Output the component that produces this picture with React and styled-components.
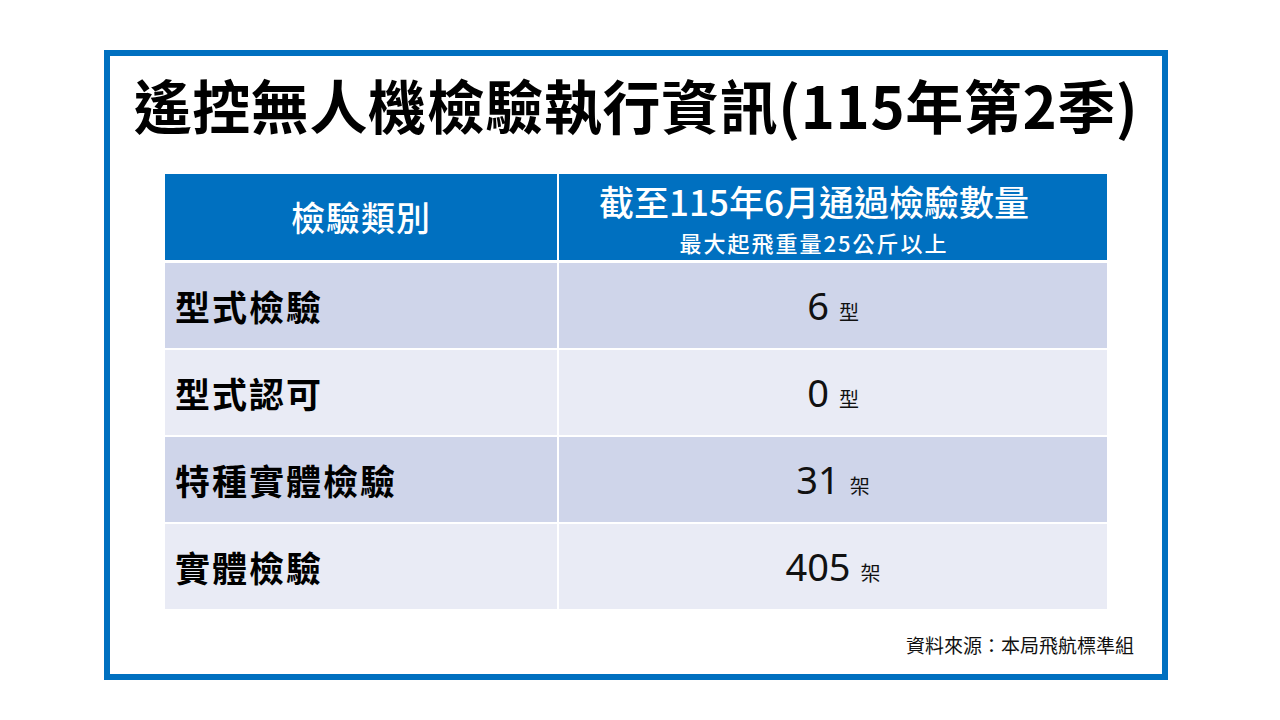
import React from 'react';
import styled, { createGlobalStyle } from 'styled-components';

const GlobalStyle = createGlobalStyle`
  html, body {
    margin: 0;
    padding: 0;
    background: #ffffff;
  }
  body {
    font-family: "Noto Sans CJK TC", "Noto Sans", sans-serif;
    color: #000000;
  }
`;

const blue = '#0070C0';

const Page = styled.div`
  width: 1280px;
  height: 720px;
  padding: 50px 0 0 104px;
  box-sizing: border-box;
`;

const Frame = styled.div`
  width: 1064px;
  height: 630px;
  box-sizing: border-box;
  border: 6px solid ${blue};
  display: flex;
  flex-direction: column;
  align-items: center;
`;

const Title = styled.h1`
  margin: 14px 0 0;
  font-size: 58px;
  font-weight: 700;
  line-height: 1.2;
  letter-spacing: 0.6px;
  white-space: nowrap;
`;

const Table = styled.div`
  margin-top: 34px;
  width: 942px;
  display: flex;
  flex-direction: column;
  gap: 2px;
`;

const Row = styled.div`
  display: grid;
  grid-template-columns: 392px 1fr;
  column-gap: 2px;
  height: ${p => (p.$head ? '86px' : '85px')};
  margin-bottom: ${p => (p.$head ? '1px' : '0')};
`;

const Cell = styled.div`
  background: ${p => (p.$head ? blue : p.$odd ? '#CFD5EA' : '#E9EBF5')};
  color: ${p => (p.$head ? '#ffffff' : '#000000')};
  display: flex;
  flex-direction: column;
  justify-content: center;
  align-items: ${p => (p.$left ? 'flex-start' : 'center')};
  padding: ${p => (p.$left ? '0 0 0 10px' : p.$shift ? '0 38px 0 0' : '0')};
`;

const HeadText = styled.div`
  font-size: ${p => p.$size || '34px'};
  font-weight: 500;
  line-height: normal;
  letter-spacing: ${p => p.$spacing || '0'};
  white-space: nowrap;
`;

const Label = styled.div`
  font-size: 35px;
  font-weight: 700;
  letter-spacing: 2px;
  line-height: 1;
`;

const Value = styled.div`
  display: flex;
  align-items: baseline;
  gap: 10px;
`;

const Num = styled.span`
  font-family: "Noto Sans", "Open Sans", sans-serif;
  font-size: 38px;
  font-weight: 400;
  color: #111111;
`;

const Unit = styled.span`
  font-size: 20px;
  font-weight: 400;
  color: #111111;
`;

const Source = styled.div`
  align-self: flex-end;
  margin: 25px 28px 0 0;
  font-size: 19px;
  line-height: 1.2;
  color: #111111;
`;

const rows = [
  { label: '型式檢驗', num: '6', unit: '型' },
  { label: '型式認可', num: '0', unit: '型' },
  { label: '特種實體檢驗', num: '31', unit: '架' },
  { label: '實體檢驗', num: '405', unit: '架' },
];

export default function App() {
  return (
    <>
      <GlobalStyle />
      <Page>
        <Frame>
          <Title>遙控無人機檢驗執行資訊(115年第2季)</Title>
          <Table>
            <Row $head>
              <Cell $head>
                <HeadText $spacing="1px">檢驗類別</HeadText>
              </Cell>
              <Cell $head $shift>
                <HeadText $size="35px">截至115年6月通過檢驗數量</HeadText>
                <HeadText $size="22px" $spacing="2px">最大起飛重量25公斤以上</HeadText>
              </Cell>
            </Row>
            {rows.map((r, i) => (
              <Row key={r.label}>
                <Cell $odd={i % 2 === 0} $left>
                  <Label>{r.label}</Label>
                </Cell>
                <Cell $odd={i % 2 === 0}>
                  <Value>
                    <Num>{r.num}</Num>
                    <Unit>{r.unit}</Unit>
                  </Value>
                </Cell>
              </Row>
            ))}
          </Table>
          <Source>資料來源：本局飛航標準組</Source>
        </Frame>
      </Page>
    </>
  );
}
